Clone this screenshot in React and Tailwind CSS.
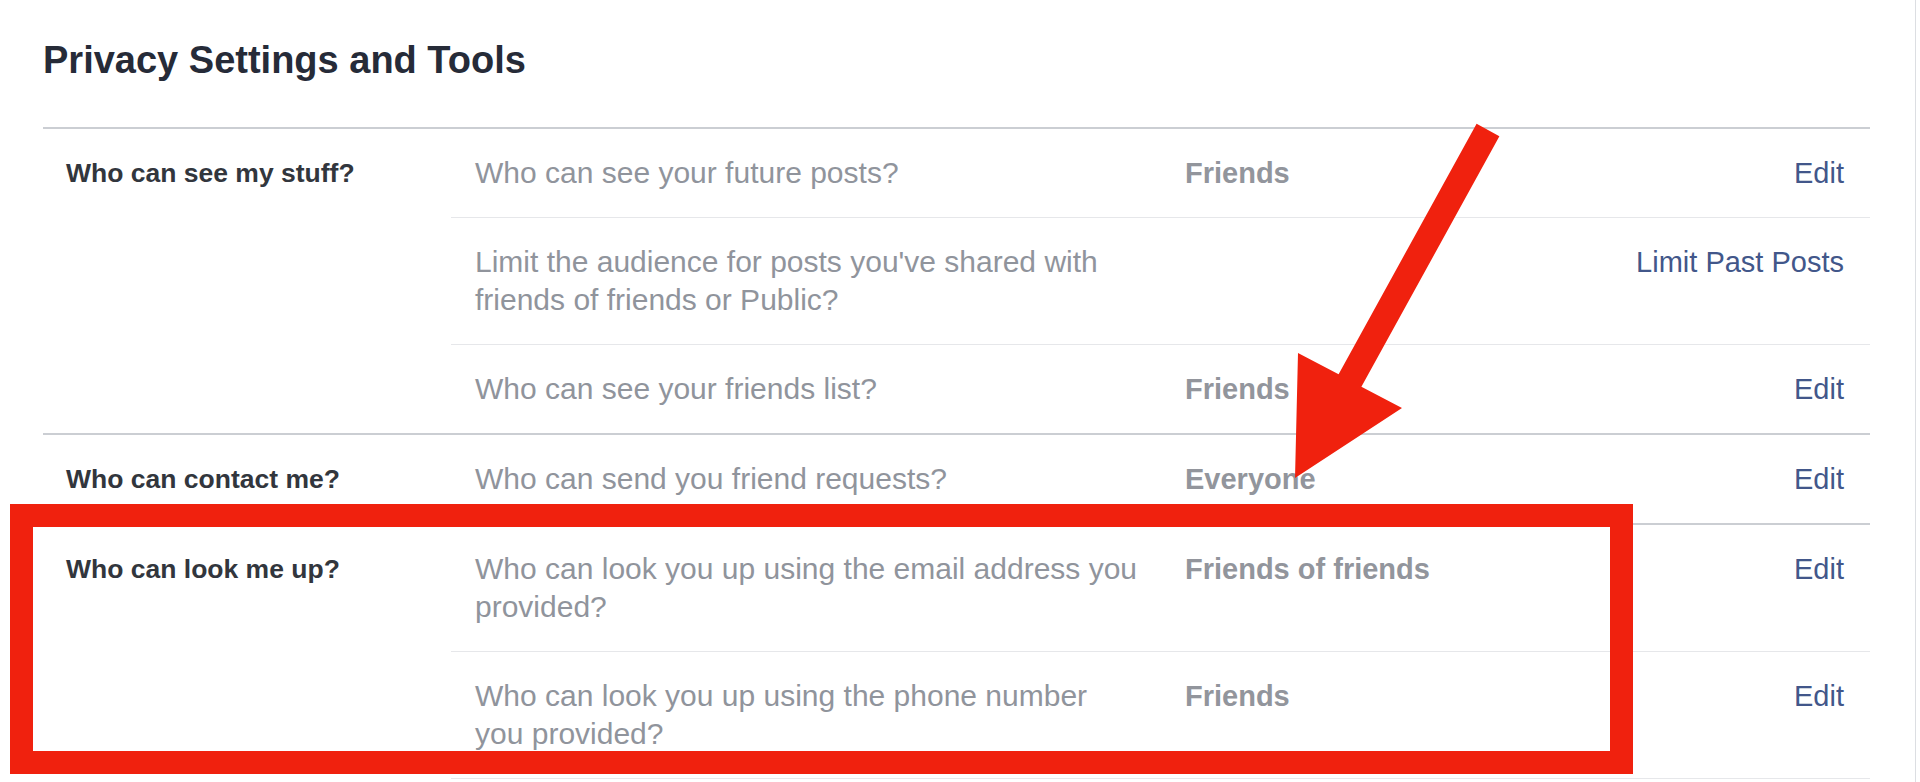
import React from "react";

const sections = [
  {
    label: "Who can see my stuff?",
    rows: [
      { q: ["Who can see your future posts?"], v: "Friends", a: "Edit" },
      {
        q: ["Limit the audience for posts you've shared with", "friends of friends or Public?"],
        v: "",
        a: "Limit Past Posts",
      },
      { q: ["Who can see your friends list?"], v: "Friends", a: "Edit" },
    ],
  },
  {
    label: "Who can contact me?",
    rows: [{ q: ["Who can send you friend requests?"], v: "Everyone", a: "Edit" }],
  },
  {
    label: "Who can look me up?",
    rows: [
      {
        q: ["Who can look you up using the email address you", "provided?"],
        v: "Friends of friends",
        a: "Edit",
      },
      {
        q: ["Who can look you up using the phone number", "you provided?"],
        v: "Friends",
        a: "Edit",
      },
    ],
  },
];

function Row({ row, first, last }) {
  return (
    <div
      className={
        "flex items-start py-[25px] pl-[24px] pr-[26px] " +
        (first ? "" : "border-t border-[#e6e7ea] ") +
        (last ? "border-b border-[#e6e7ea]" : "")
      }
    >
      <div className="w-[710px] text-[30px] leading-[38px] text-[#90949c]">
        {row.q.map((l, i) => (
          <div key={i} className="whitespace-nowrap">
            {l}
          </div>
        ))}
      </div>
      <div className="flex-1 text-[29px] leading-[38px] font-bold text-[#92959c] whitespace-nowrap">
        {row.v}
      </div>
      <div className="text-[29px] leading-[38px] text-[#42578a] whitespace-nowrap">{row.a}</div>
    </div>
  );
}

export default function App() {
  return (
    <div
      className="relative w-[1920px] h-[782px] bg-white overflow-hidden"
      style={{ fontFamily: '"Liberation Sans", Arial, sans-serif' }}
    >
      <div className="w-[1916px] h-full border-r border-[#dcdee2]">
        <div className="pl-[43px] w-[1870px]">
          <h1 className="pt-[37px] pb-[44px] text-[38px] leading-[46px] font-bold text-[#262b38]">
            Privacy Settings and Tools
          </h1>
          {sections.map((s, si) => (
            <div key={si} className="flex border-t-2 border-[#cbced3]">
              <div className="w-[408px] shrink-0 pl-[23px] pt-[25px] text-[26.5px] leading-[38px] font-bold text-[#32363d] whitespace-nowrap">
                {s.label}
              </div>
              <div className="flex-1">
                {s.rows.map((r, ri) => (
                  <Row
                    key={ri}
                    row={r}
                    first={ri === 0}
                    last={si === sections.length - 1 && ri === s.rows.length - 1}
                  />
                ))}
              </div>
            </div>
          ))}
        </div>
      </div>

      {/* red highlight box */}
      <div className="absolute left-[10px] top-[504px] w-[1623px] h-[270px] border-[23px] border-[#f0210e]" />

      {/* red arrow */}
      <svg
        className="absolute left-0 top-0 pointer-events-none"
        width="1920"
        height="782"
        viewBox="0 0 1920 782"
      >
        <polygon
          fill="#f0210e"
          points="1476.6,123.7 1499.4,136.3 1361.4,386.8 1402,408 1295,478 1298,353 1338.6,374.2"
        />
      </svg>
    </div>
  );
}
